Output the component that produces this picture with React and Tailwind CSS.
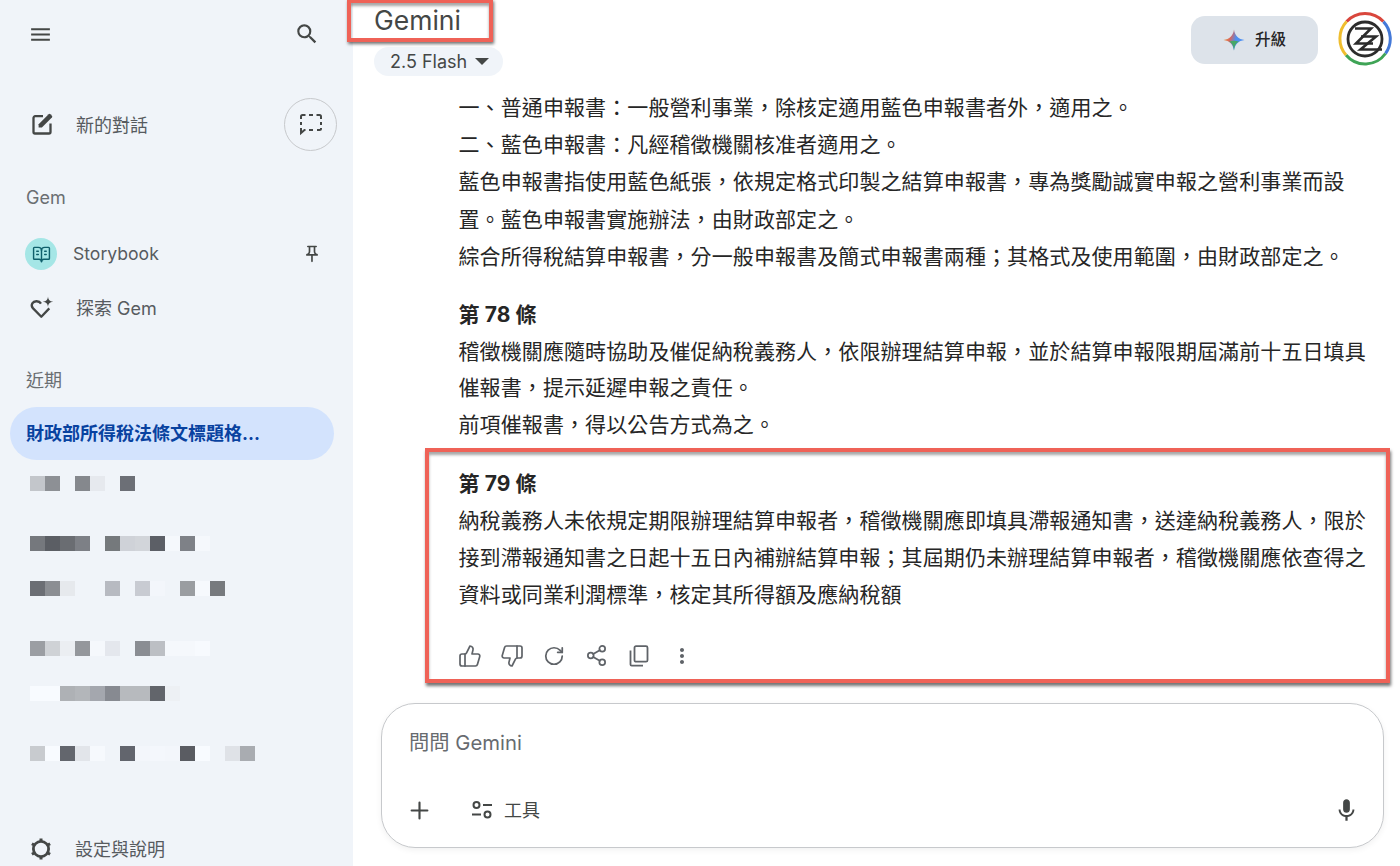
import React from "react";
import { BookOpenText, ThumbsUp, ThumbsDown, RotateCw, Share2, Plus } from "lucide-react";
import { MdMic, MdOutlinePushPin, MdMenu, MdSearch, MdMoreVert } from "react-icons/md";

const rows = [
  { mt: "mt-[16px]", tiles: ["bg-[#c3c6cb]", "bg-[#8d9095]", "", "bg-[#85888d]", "bg-[#e6e9ee]", "", "bg-[#6c6f76]"] },
  { mt: "mt-[45px]", tiles: ["bg-[#75787d]", "bg-[#5b5e64]", "bg-[#6a6d72]", "bg-[#7d8086]", "", "bg-[#75797c]", "bg-[#cfd2d8]", "bg-[#d2d5da]", "bg-[#5c5f66]", "bg-[#f5f8fc]", "bg-[#7e8187]", "bg-[#f5f8fc]"] },
  { mt: "mt-[30px]", tiles: ["bg-[#6b6e74]", "bg-[#8b8e93]", "bg-[#e6e9ed]", "", "", "bg-[#b7bac1]", "", "bg-[#c8cbd2]", "bg-[#f3f6fb]", "", "bg-[#9a9da1]", "bg-[#f6f9fd]", "bg-[#777a7e]"] },
  { mt: "mt-[45px]", tiles: ["bg-[#9b9ea3]", "bg-[#cfd2d6]", "bg-[#ebeef2]", "bg-[#94979c]", "bg-[#f5f8fc]", "bg-[#e4e7ed]", "", "bg-[#8a8d93]", "bg-[#bcbfc4]", "bg-[#f5f8fc]", "bg-[#f5f8fc]", "bg-[#f7fafe]"] },
  { mt: "mt-[30px]", tiles: ["bg-[#f8fbff]", "bg-[#f8fbff]", "bg-[#aeb1b5]", "bg-[#b3b6ba]", "bg-[#a4a7ae]", "bg-[#878a91]", "bg-[#b7babe]", "bg-[#b7babe]", "bg-[#62656b]", "bg-[#edf0f4]"] },
  { mt: "mt-[45px]", tiles: ["bg-[#c8cbcf]", "bg-[#f8fbff]", "bg-[#63666d]", "bg-[#e2e5ea]", "bg-[#f6f9fd]", "", "bg-[#62656d]", "bg-[#f3f6fb]", "bg-[#f4f7fc]", "bg-[#f3f6fb]", "bg-[#5a5c62]", "bg-[#f8fbff]", "", "bg-[#dfe2e7]", "bg-[#a9acb1]"] },
];

const blocks = [
  { t: "一、普通申報書：一般營利事業，除核定適用藍色申報書者外，適用之。" },
  { t: "二、藍色申報書：凡經稽徵機關核准者適用之。" },
  { t: "藍色申報書指使用藍色紙張，依規定格式印製之結算申報書，專為獎勵誠實申報之營利事業而設" },
  { t: "置。藍色申報書實施辦法，由財政部定之。" },
  { t: "綜合所得稅結算申報書，分一般申報書及簡式申報書兩種；其格式及使用範圍，由財政部定之。" },
  { t: "第 78 條", b: true, mt: "mt-[21px]" },
  { t: "稽徵機關應隨時協助及催促納稅義務人，依限辦理結算申報，並於結算申報限期屆滿前十五日填具" },
  { t: "催報書，提示延遲申報之責任。", mt: "-mt-[1px]" },
  { t: "前項催報書，得以公告方式為之。", mt: "-mt-[1px]" },
  { t: "第 79 條", b: true, mt: "mt-[22px]" },
  { t: "納稅義務人未依規定期限辦理結算申報者，稽徵機關應即填具滯報通知書，送達納稅義務人，限於" },
  { t: "接到滯報通知書之日起十五日內補辦結算申報；其屆期仍未辦理結算申報者，稽徵機關應依查得之" },
  { t: "資料或同業利潤標準，核定其所得額及應納稅額" },
];

function Star() {
  return (
    <svg width="22" height="22" viewBox="0 0 24 24">
      <defs>
        <linearGradient id="starH" x1="0" y1="0.3" x2="1" y2="0.6">
          <stop offset="0" stopColor="#eaa53c" />
          <stop offset="0.32" stopColor="#d9655c" />
          <stop offset="0.58" stopColor="#4f8ef0" />
          <stop offset="1" stopColor="#4a90f5" />
        </linearGradient>
      </defs>
      <path d="M12 0.5C12.8 7 17 11.2 23.5 12C17 12.8 12.8 17 12 23.5C11.2 17 7 12.8 0.5 12C7 11.2 11.2 7 12 0.5Z" fill="url(#starH)" />
      <path d="M6.5 14C10 15.2 11.5 18 12 23.5C12.5 18 14 15.2 17.5 14Q12 11.5 6.5 14Z" fill="#46a868" />
    </svg>
  );
}

function Logo() {
  return (
    <svg width="54" height="54" viewBox="0 0 54 54" fill="none">
      <path d="M8.6 9.6A25 25 0 0 1 45.4 9.6" stroke="#d9463c" strokeWidth="3" />
      <path d="M45.4 9.6A25 25 0 0 1 47.5 41.5" stroke="#4479d8" strokeWidth="3" />
      <path d="M47.5 41.5A25 25 0 0 1 8 43" stroke="#3fa456" strokeWidth="3" />
      <path d="M8 43A25 25 0 0 1 8.6 9.6" stroke="#efbd2e" strokeWidth="3" />
      <circle cx="27" cy="27" r="17" stroke="#2c2c2c" strokeWidth="2.8" />
      <path d="M17 16.5H33L18 31.5H35" stroke="#2c2c2c" strokeWidth="2.6" />
      <path d="M23 24.5H38L22.5 37.5H44" stroke="#2c2c2c" strokeWidth="2.6" />
    </svg>
  );
}

function EditSquare() {
  return (
    <svg width="24" height="24" viewBox="0 0 24 24" fill="none">
      <path d="M13 4.2H5.2A1.7 1.7 0 0 0 3.5 5.9V20A1.5 1.5 0 0 0 5 21.5H19A1.5 1.5 0 0 0 20.5 20V11.5" stroke="#444746" strokeWidth="2.3" />
      <path d="M8.6 15.6V12.3L18.6 2.2A1.3 1.3 0 0 1 20.4 2.2L21.9 3.7A1.3 1.3 0 0 1 21.9 5.5L11.9 15.6Z" fill="#444746" />
    </svg>
  );
}

function DashedChat() {
  return (
    <svg width="24" height="24" viewBox="0 0 24 24" fill="none" stroke="#444746" strokeWidth="2">
      <path d="M2 7V4.5A1.5 1.5 0 0 1 3.5 3H6.5M10 3h4M17.5 3h3A1.5 1.5 0 0 1 22 4.5V7M22 10v3M22 16v.5a1.5 1.5 0 0 1-1.5 1.5H18M14 18h-4M2 10v3" />
      <path d="M2 16v5l3.5-3H6.5" />
    </svg>
  );
}

function GemIcon() {
  return (
    <svg width="26" height="26" viewBox="0 0 26 26" fill="none">
      <path d="M12 8.6C10.2 5.6 5 5.4 3.3 8.3C2.2 10.3 2.8 12 4.1 13.4L12.3 21.7L20.3 13.4" stroke="#444746" strokeWidth="2.3" strokeLinejoin="round" />
      <path d="M19 1.5C19.4 4.8 20.6 6.3 24.2 6.8C20.6 7.3 19.4 8.8 19 12C18.6 8.8 17.4 7.3 13.8 6.8C17.4 6.3 18.6 4.8 19 1.5Z" fill="#444746" />
    </svg>
  );
}

function Gear() {
  return (
    <svg width="24" height="24" viewBox="0 0 24 24" fill="none" stroke="#444746">
      <circle cx="12" cy="12" r="7.6" strokeWidth="2.8" />
      <path strokeWidth="3" d="M12 1.5v2.6M12 19.9v2.6M2.9 6.7l2.3 1.3M18.8 16l2.3 1.3M2.9 17.3l2.3-1.3M18.8 8l2.3-1.3" />
    </svg>
  );
}

function Tune() {
  return (
    <svg width="24" height="24" viewBox="0 0 24 24" fill="none" stroke="#444746" strokeWidth="2">
      <circle cx="6.5" cy="7" r="3" />
      <path d="M13 7h9M2 16.5h9" />
      <circle cx="17.5" cy="16.5" r="3" />
    </svg>
  );
}

function CopyIcon() {
  return (
    <svg width="22" height="22" viewBox="0 0 22 22" fill="none" stroke="#5f6368" strokeWidth="1.8">
      <rect x="6.5" y="1.2" width="13" height="15.5" rx="1.5" />
      <path d="M2.5 5.5v14a1.2 1.2 0 0 0 1.2 1.2H15" />
    </svg>
  );
}

function Act({ children }) {
  return <div className="flex h-[24px] w-[42.4px] items-center justify-center">{children}</div>;
}

export default function App() {
  return (
    <div className="relative flex h-[866px] w-[1400px] overflow-hidden bg-white font-['Inter','Noto_Sans_CJK_TC',sans-serif] text-[#262626]">
      <aside className="flex w-[353px] shrink-0 flex-col bg-[#f0f4f9] text-[#575b5f]">
        <div className="mt-[22px] flex h-[24px] items-center justify-between pl-[28px] pr-[33px]">
          <MdMenu size={25} color="#444746" />
          <MdSearch size={26} color="#444746" />
        </div>
        <div className="mt-[51px] flex h-[54px] items-center justify-between pl-[30px] pr-[16px]">
          <div className="flex items-center gap-[22px]">
            <EditSquare />
            <span className="pt-[3px] text-[18px]">新的對話</span>
          </div>
          <div className="flex h-[53px] w-[53px] items-center justify-center rounded-full border border-[#c7c9cc]">
            <DashedChat />
          </div>
        </div>
        <div className="mt-[35px] pl-[26px] text-[18px] leading-[24px] text-[#6a6e72]">Gem</div>
        <div className="mt-[28px] flex h-[32px] items-center justify-between pl-[25px] pr-[31px]">
          <div className="flex items-center gap-[16px]">
            <div className="flex h-[32px] w-[32px] items-center justify-center rounded-full bg-[#a5e6e6]">
              <BookOpenText size={19} color="#0f5f6b" strokeWidth={1.8} />
            </div>
            <span className="text-[17.6px]">Storybook</span>
          </div>
          <MdOutlinePushPin size={20} color="#444746" />
        </div>
        <div className="mt-[16px] flex h-[44px] items-center gap-[21px] pl-[29px] text-[18px]">
          <GemIcon />
          <span>探索 Gem</span>
        </div>
        <div className="mt-[39px] pl-[26px] text-[18px] leading-[24px] text-[#6a6e72]">近期</div>
        <div className="ml-[10px] mt-[14px] flex h-[53px] w-[324px] items-center rounded-full bg-[#d3e3fd] pl-[16px] text-[18px] font-bold text-[#0842a0]">
          財政部所得稅法條文標題格...
        </div>
        {rows.map((r, i) => (
          <div key={i} className={`flex h-[15px] pl-[30px] ${r.mt}`}>
            {r.tiles.map((c, j) => (
              <div key={j} className={`h-[15px] w-[15px] ${c}`} />
            ))}
          </div>
        ))}
        <div className="mb-[5px] mt-auto flex h-[24px] items-center gap-[22px] pl-[29px] text-[18px]">
          <Gear />
          <span>設定與說明</span>
        </div>
      </aside>

      <main className="flex min-w-0 flex-1 flex-col">
        <header className="flex h-[89px] shrink-0 items-start justify-between pl-[21px] pr-[8px]">
          <div className="flex flex-col items-start">
            <div className="mt-[4px] text-[26.5px] leading-[32px] text-[#444746]">Gemini</div>
            <div className="mt-[11px] flex h-[29px] w-[129px] items-center gap-[8px] rounded-full bg-[#f0f4f9] pl-[16px] text-[18px] text-[#444746]">
              2.5 Flash
              <svg width="14" height="7" viewBox="0 0 14 7"><path d="M0 0h14L7 7z" fill="#444746" /></svg>
            </div>
          </div>
          <div className="flex items-start gap-[20px]">
            <div className="mt-[16px] flex h-[48px] w-[127px] items-center justify-center gap-[10px] rounded-[14px] bg-[#dde3ea] text-[15.5px] font-medium">
              <Star />
              <span>升級</span>
            </div>
            <div className="mt-[12px]"><Logo /></div>
          </div>
        </header>

        <article className="min-h-0 flex-1 overflow-hidden pl-[105.5px] text-[21px] leading-[37.2px] tracking-[0.1px]">
          {blocks.map((b, i) => (
            <div key={i} className={`whitespace-nowrap ${b.b ? "font-bold" : ""} ${b.mt || ""}`}>{b.t}</div>
          ))}
          <div className="-ml-[10px] mt-[30px] flex h-[24px] items-center">
            <Act><ThumbsUp size={24} color="#5f6368" strokeWidth={1.7} /></Act>
            <Act><ThumbsDown size={24} color="#5f6368" strokeWidth={1.7} /></Act>
            <Act><RotateCw size={22} color="#5f6368" strokeWidth={1.9} /></Act>
            <Act><Share2 size={23} color="#5f6368" strokeWidth={1.8} /></Act>
            <Act><CopyIcon /></Act>
            <Act><MdMoreVert size={24} color="#5f6368" /></Act>
          </div>
        </article>

        <div className="shrink-0 pb-[18px] pl-[28px] pr-[16px]">
          <div className="flex h-[145px] flex-col justify-between rounded-[34px] border border-[#c7c9cc] bg-white pb-[22px] pl-[27px] pr-[23px] pt-[24px] shadow-[0_2px_6px_rgba(0,0,0,0.06)]">
            <div className="text-[20.3px] leading-[30px] text-[#676b6f]">問問 Gemini</div>
            <div className="flex h-[30px] items-center justify-between">
              <div className="flex items-center">
                <Plus size={27} color="#444746" strokeWidth={1.9} className="-ml-[3px]" />
                <div className="ml-[37px] flex items-center gap-[10px] text-[18px] text-[#444746]">
                  <Tune />
                  <span>工具</span>
                </div>
              </div>
              <MdMic size={27} color="#444746" />
            </div>
          </div>
        </div>
      </main>

      <div className="absolute left-[347px] top-[-1px] h-[43px] w-[146px] border-[4px] border-[#ef6257] shadow-[1px_2px_3px_rgba(0,0,0,0.55),inset_0_3px_3px_rgba(0,0,0,0.35)]" />
      <div className="absolute left-[425px] top-[448px] h-[235px] w-[965px] border-[4px] border-[#ef6257] shadow-[1px_3px_3px_rgba(0,0,0,0.55),inset_0_3px_3px_rgba(0,0,0,0.35)]" />
    </div>
  );
}
